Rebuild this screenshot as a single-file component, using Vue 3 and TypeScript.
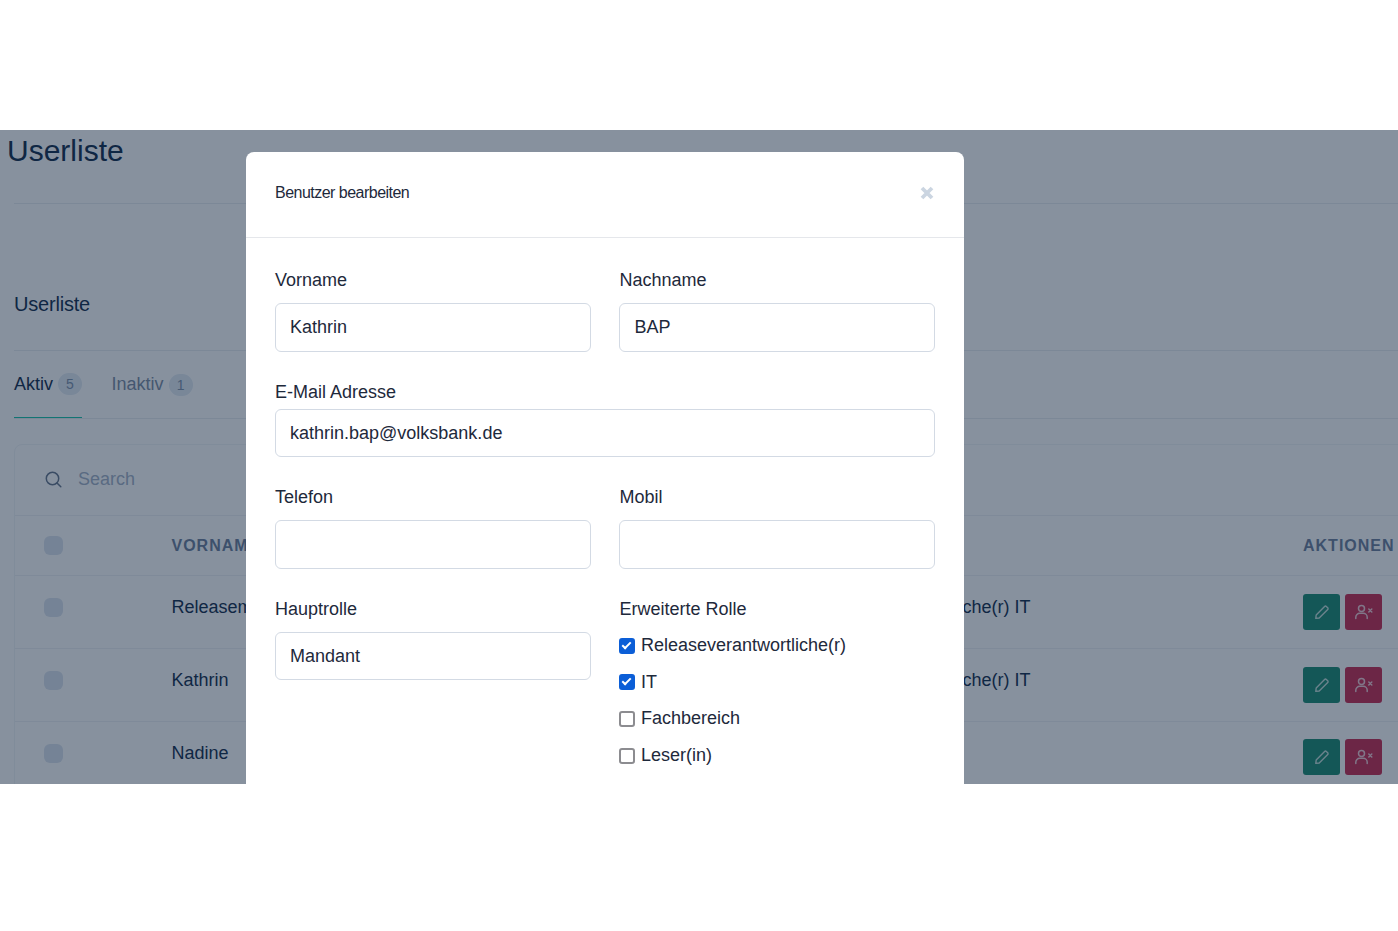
<script setup lang="ts">
interface Row { name: string; role: string }
const rows: Row[] = [
  { name: 'Releasemanager', role: 'Releaseverantwortliche(r) IT' },
  { name: 'Kathrin', role: 'Releaseverantwortliche(r) IT' },
  { name: 'Nadine', role: '' },
]
const roles = [
  { label: 'Releaseverantwortliche(r)', on: true },
  { label: 'IT', on: true },
  { label: 'Fachbereich', on: false },
  { label: 'Leser(in)', on: false },
]
</script>

<template>
  <div class="scene">
    <main class="page">
      <h1 class="title">Userliste</h1>
      <div class="section-head"><h2>Userliste</h2></div>
      <nav class="tabs">
        <div class="tab active">Aktiv <span class="badge">5</span></div>
        <div class="tab">Inaktiv <span class="badge">1</span></div>
      </nav>
      <section class="card">
        <div class="search">
          <svg width="17" height="17" viewBox="0 0 17 17" fill="none" stroke="currentColor" stroke-width="1.5" stroke-linecap="round">
            <circle cx="7.5" cy="7.5" r="6.2" />
            <path d="M12 12 15.8 15.8" />
          </svg>
          <span>Search</span>
        </div>
        <div class="row head">
          <span class="box"></span>
          <span class="name">VORNAME</span>
          <span class="role"></span>
          <span class="actions">AKTIONEN</span>
        </div>
        <div v-for="r in rows" :key="r.name" class="row body">
          <span class="box"></span>
          <span class="name">{{ r.name }}</span>
          <span class="role">{{ r.role }}</span>
          <span class="actions">
            <button class="btn green" type="button">
              <svg width="18" height="18" viewBox="0 0 18 18" fill="none" stroke="currentColor" stroke-width="1.4" stroke-linejoin="round">
                <path d="M3.2 12 11.6 3.4a1.2 1.2 0 0 1 1.7 0l1.4 1.4a1.2 1.2 0 0 1 0 1.7L6.2 15l-3.4.4z" />
              </svg>
            </button>
            <button class="btn red" type="button">
              <svg width="20" height="18" viewBox="0 0 20 18" fill="none" stroke="currentColor" stroke-width="1.5" stroke-linecap="round">
                <circle cx="7.5" cy="5.6" r="3" />
                <path d="M1.8 15.5v-1.2a4 4 0 0 1 4-4h3.4a4 4 0 0 1 4 4v1.2" />
                <path d="M14.8 6 17.8 9M17.8 6 14.8 9" />
              </svg>
            </button>
          </span>
        </div>
      </section>
    </main>

    <div class="overlay"></div>

    <div class="modal">
      <header class="modal-head">
        <h3>Benutzer bearbeiten</h3>
        <svg class="close" width="14" height="14" viewBox="0 0 14 14" fill="none" stroke="currentColor" stroke-width="3.8">
          <path d="M2 2 12 12M12 2 2 12" />
        </svg>
      </header>
      <form class="form">
        <label class="field f1">Vorname<input value="Kathrin" /></label>
        <label class="field f1">Nachname<input value="BAP" /></label>
        <label class="field f2 wide">E-Mail Adresse<input value="kathrin.bap@volksbank.de" /></label>
        <label class="field f3">Telefon<input /></label>
        <label class="field f3">Mobil<input /></label>
        <label class="field f4">Hauptrolle<input value="Mandant" /></label>
        <div class="field f4">
          <span>Erweiterte Rolle</span>
          <div class="checks">
            <label v-for="c in roles" :key="c.label" class="check">
              <input type="checkbox" :checked="c.on" />{{ c.label }}
            </label>
          </div>
        </div>
      </form>
    </div>
  </div>
</template>

<style scoped>
.scene {
  position: relative;
  margin-top: 130px;
  height: 654px;
  overflow: hidden;
  font-family: "Liberation Sans", Arial, sans-serif;
  color: #1e293b;
  background: #fff;
}
.page {
  width: 1440px;
}
.title {
  margin: 0;
  padding-left: 7px;
  padding-top: 1px;
  height: 72px;
  font-size: 30px;
  font-weight: 400;
  line-height: 40px;
  color: #0f2a4a;
  box-sizing: content-box;
}
.section-head {
  margin-left: 14px;
  height: 145px;
  padding-bottom: 1px;
  border-top: 1px solid #e8ecf1;
  border-bottom: 1px solid #e8ecf1;
  box-sizing: content-box;
  display: flex;
  align-items: flex-end;
}
.section-head h2 {
  margin: 0 0 33px;
  font-size: 20px;
  font-weight: 400;
  line-height: 24px;
  letter-spacing: -0.2px;
  color: #0f2a4a;
}
.tabs {
  margin-left: 14px;
  height: 68px;
  display: flex;
  gap: 29.5px;
  border-bottom: 1px solid #e8ecf1;
  box-sizing: border-box;
}
.tab {
  height: 67px;
  display: flex;
  align-items: center;
  gap: 5px;
  font-size: 18px;
  color: #7a8ba3;
  box-sizing: border-box;
}
.tab.active {
  color: #0f2a4a;
  border-bottom: 1px solid #14c4a8;
}
.badge {
  width: 24px;
  height: 22px;
  border-radius: 11px;
  background: #e2eaf3;
  color: #7d90aa;
  font-size: 14px;
  display: flex;
  align-items: center;
  justify-content: center;
}
.card {
  margin: 25px 0 0 14px;
  border: 1px solid #f1f4f7;
  border-radius: 8px 0 0 0;
  background: #fff;
}
.search {
  height: 68px;
  padding: 0 0 2px 30px;
  display: flex;
  align-items: center;
  gap: 16px;
  font-size: 18px;
  color: #a3b1c6;
  border-bottom: 1px solid #eef1f5;
}
.search svg {
  color: #64748b;
}
.row {
  display: grid;
  grid-template-columns: 127.5px 633px 498.5px 1fr;
  align-items: center;
  padding-left: 29px;
  border-bottom: 1px solid #eef1f5;
  font-size: 18px;
  color: #0f2a4a;
}
.row.head {
  height: 59px;
  font-size: 16px;
  font-weight: 700;
  letter-spacing: 1px;
  color: #6a7c9a;
}
.row.body {
  height: 71.75px;
}
.row.body .box,
.row.body .name,
.row.body .role {
  margin-bottom: 8px;
}
.box {
  width: 19px;
  height: 19px;
  border-radius: 6px;
  background: #dbe3ee;
}
.actions {
  display: flex;
  gap: 5px;
}
.btn {
  width: 37px;
  height: 36px;
  padding: 0;
  border: 0;
  border-radius: 3px;
  color: #fff;
  display: flex;
  align-items: center;
  justify-content: center;
}
.btn svg {
  opacity: 0.75;
}
.green {
  background: #188a70;
}
.red {
  background: #c9284f;
}
.overlay {
  position: absolute;
  inset: 0;
  background: rgba(15, 35, 62, 0.5);
}
.modal {
  position: absolute;
  left: 246px;
  top: 22px;
  width: 718px;
  height: 700px;
  background: #fff;
  border-radius: 8px;
}
.modal-head {
  height: 86px;
  box-sizing: border-box;
  padding: 0 29px 4px;
  border-bottom: 1px solid #e5e7eb;
  display: flex;
  align-items: center;
  justify-content: space-between;
}
.modal-head h3 {
  margin: 0;
  font-size: 16px;
  font-weight: 400;
  letter-spacing: -0.52px;
  color: #1e293b;
}
.close {
  color: #cbd5e1;
  margin-right: 1px;
}
.form {
  padding: 0 29px;
  display: grid;
  grid-template-columns: 316px 315.6px;
  column-gap: 28.4px;
}
.field {
  display: flex;
  flex-direction: column;
  font-size: 18px;
  line-height: 21px;
  color: #1e293b;
}
.wide {
  grid-column: 1 / -1;
}
.f1 {
  padding-top: 32px;
  gap: 12px;
}
.f2 {
  padding-top: 30px;
  gap: 6px;
}
.f3 {
  padding-top: 30px;
  gap: 12px;
}
.f4 {
  padding-top: 30px;
  gap: 12px;
}
.field input:not([type="checkbox"]) {
  width: 100%;
  height: 49px;
  box-sizing: border-box;
  padding: 0 14px;
  border: 1px solid #d3dae4;
  border-radius: 6px;
  font: inherit;
  color: #1e293b;
  background: #fff;
  outline: none;
}
.f2 input:not([type="checkbox"]),
.f4 input:not([type="checkbox"]) {
  height: 48px;
}
.checks {
  display: flex;
  flex-direction: column;
  gap: 15.7px;
  margin-top: 3px;
}
.check {
  display: flex;
  align-items: center;
  gap: 5.6px;
  height: 21px;
}
.check input {
  appearance: none;
  position: relative;
  width: 16px;
  height: 16px;
  margin: 0;
  box-sizing: border-box;
  border: 2px solid #8c8c90;
  border-radius: 3px;
  background: #fff;
}
.check input:checked {
  background: #0b5ed7;
  border-color: #0b5ed7;
}
.check input:checked::after {
  content: "";
  position: absolute;
  left: 3px;
  top: 0;
  width: 3px;
  height: 7px;
  border: solid #fff;
  border-width: 0 2px 2px 0;
  transform: rotate(45deg);
}
</style>
